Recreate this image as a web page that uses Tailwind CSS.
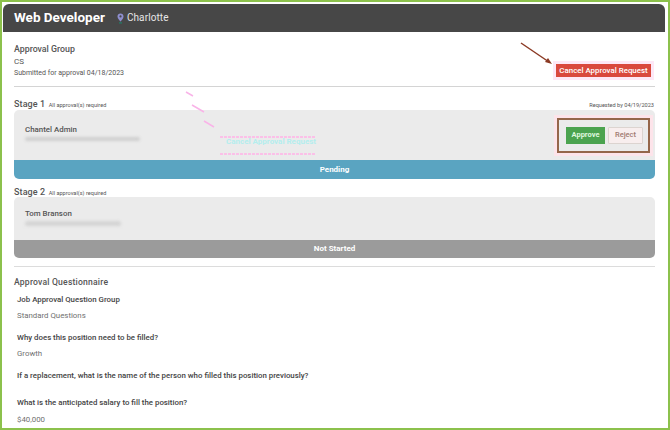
<!DOCTYPE html>
<html>
<head>
<script src="https://cdn.jsdelivr.net/npm/@tailwindcss/browser@4"></script>
</head>
<body class="m-0">
<div class="relative w-[670px] h-[430px] overflow-hidden bg-white border-2 border-[#8cc14c] pt-[2px] pl-[1px] font-['Roboto','Liberation_Sans',sans-serif] text-[#555]">
  <header class="w-[662px] h-[28px] bg-[#474747] rounded-t-[6px] flex items-center pl-[11px]">
    <span class="text-[13.5px] font-bold text-white leading-none">Web Developer</span>
    <svg class="ml-[12px] mr-[3px]" width="7" height="11" viewBox="0 0 7 11"><path d="M3.5 0.5C1.7 0.5 0.5 1.8 0.5 3.4C0.5 5.4 3.5 8.5 3.5 8.5C3.5 8.5 6.5 5.4 6.5 3.4C6.5 1.8 5.3 0.5 3.5 0.5Z" fill="#8f8fd0"/><circle cx="3.5" cy="3.4" r="1.1" fill="#474747"/><rect x="2" y="9.3" width="3" height="1.2" fill="#1f7f6a"/></svg>
    <span class="text-[10px] text-[#e6e6e6] leading-none tracking-[0.1px]">Charlotte</span>
  </header>

  <main class="w-[641px] ml-[11px]">
    <section class="h-[55px] border-b border-[#d4d4d4] relative pt-[11px]">
      <p class="text-[8.8px] font-medium leading-[12px]">Approval Group</p>
      <p class="text-[8px] leading-[10px] mt-[2px]">CS</p>
      <p class="text-[7px] leading-[10px] mt-[1px]">Submitted for approval 04/18/2023</p>
      <button class="absolute right-[4px] top-[32px] w-[95px] h-[13px] bg-[#d9493d] text-white text-[7.9px] font-medium leading-none whitespace-nowrap shadow-[0_0_0_3px_#fde8f6]">Cancel Approval Request</button>
    </section>

    <section class="mt-[9px]">
      <div class="flex items-end justify-between h-[13px]">
        <p class="text-[9px] font-medium leading-none tracking-[0.1px]">Stage 1 <span class="text-[5.6px] font-normal ml-[1px] tracking-normal">All approval(s) required</span></p>
        <span class="text-[5.6px] leading-[8px] mr-[1px]">Requested by 04/19/2023</span>
      </div>
      <div class="mt-[1px] bg-[#ebebeb] rounded-t-[5px] h-[50px] flex items-center justify-between pl-[11px] pr-[5px]">
        <div class="-mt-[4px]">
          <p class="text-[7.9px] font-medium leading-[10px]">Chantel Admin</p>
          <div class="mt-[2px] h-[4px] w-[115px] bg-[#cfcfcf] blur-[1.5px] rounded-full"></div>
        </div>
        <div class="w-[93px] h-[35px] border-2 border-[#94664a] shadow-[0_0_0_3px_#fde4ea] flex items-center justify-center gap-[3px] pl-[2px]">
          <button class="w-[39px] h-[17px] bg-[#4ba34f] text-[#dff7df] text-[7.5px] font-bold leading-none">Approve</button>
          <button class="w-[35px] h-[17px] bg-[#f8eeee] border border-[#dcd4d0] text-[#a07a70] text-[7.5px] font-medium leading-none rounded-[1px]">Reject</button>
        </div>
      </div>
      <div class="h-[19px] bg-[#5aa4c1] rounded-b-[5px] flex items-center justify-center text-white text-[8px] font-bold leading-none">Pending</div>
    </section>

    <section class="mt-[6px]">
      <div class="h-[12px] flex items-end">
        <p class="text-[9px] font-medium leading-none tracking-[0.1px]">Stage 2 <span class="text-[5.6px] font-normal ml-[1px] tracking-normal">All approval(s) required</span></p>
      </div>
      <div class="bg-[#ebebeb] rounded-t-[5px] h-[43px] pl-[11px] pt-[12px]">
        <p class="text-[7.9px] font-medium leading-[10px]">Tom Branson</p>
        <div class="mt-[2px] h-[5px] w-[96px] bg-[#d4d4d4] blur-[1.5px] rounded-full"></div>
      </div>
      <div class="h-[18px] bg-[#9b9b9b] rounded-b-[5px] flex items-center justify-center text-white text-[8px] font-bold leading-none">Not Started</div>
    </section>

    <section class="mt-[8px] border-t border-[#dcdcdc] pt-[9px]">
      <p class="text-[8.6px] font-medium leading-[12px] tracking-[0.2px]">Approval Questionnaire</p>
      <div class="pl-[3px] mt-[6px]">
        <p class="text-[7.85px] font-medium text-[#444] leading-[12px]">Job Approval Question Group</p>
        <p class="text-[7.85px] text-[#707070] leading-[12px] mt-[4px]">Standard Questions</p>
        <p class="text-[7.85px] font-medium text-[#444] leading-[12px] mt-[10px]">Why does this position need to be filled?</p>
        <p class="text-[7.85px] text-[#707070] leading-[12px] mt-[4px]">Growth</p>
        <p class="text-[7.85px] font-medium text-[#444] leading-[12px] mt-[10px]">If a replacement, what is the name of the person who filled this position previously?</p>
        <p class="text-[7.85px] font-medium text-[#444] leading-[12px] mt-[15px]">What is the anticipated salary to fill the position?</p>
        <p class="text-[7.85px] text-[#707070] leading-[12px] mt-[5px]">$40,000</p>
      </div>
    </section>
  </main>

  <svg class="absolute left-[-2px] top-[-2px] pointer-events-none" width="670" height="430" viewBox="0 0 670 430">
    <path d="M521 43L549 62" stroke="#8b3a24" stroke-width="1.5"/>
    <path d="M552 64L545 62L548 58Z" fill="#8b3a24"/>
    <path d="M186 92L193 96M192 105L204 112M204 121L214 127" stroke="#f9b4e8" stroke-width="1.5"/>
    <path d="M220 137H316M220 154H316" stroke="#fbc0e8" stroke-width="2" stroke-dasharray="3 1"/>
  </svg>
  <span class="absolute left-[224px] top-[136px] text-[#b4eeee] text-[8px] font-bold leading-none whitespace-nowrap">Cancel Approval Request</span>
</div>
</body>
</html>
